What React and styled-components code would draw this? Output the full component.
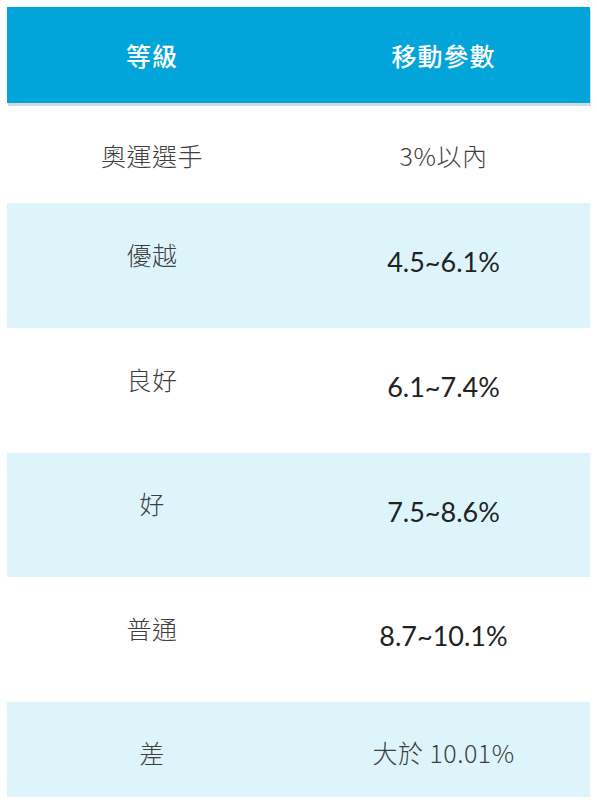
import React from 'react'
import styled, { createGlobalStyle } from 'styled-components'

const GlobalStyle = createGlobalStyle`
  html, body {
    margin: 0;
    padding: 0;
    background: #fff;
  }
  body {
    font-family: "Noto Sans CJK TC", "Noto Sans", sans-serif;
  }
`

const Page = styled.div`
  width: 597px;
  height: 804px;
  padding: 7px 0 0 7px;
  box-sizing: border-box;
`

const Table = styled.div`
  width: 583px;
  display: flex;
  flex-direction: column;
`

const Header = styled.div`
  display: grid;
  grid-template-columns: 290px 1fr;
  height: 96px;
  background: #02a5d9;
  box-shadow: 1px 3px 0 #d3dadd;
  margin-bottom: 3px;
`

const HeadCell = styled.div`
  display: flex;
  align-items: center;
  justify-content: center;
  color: #fff;
  font-size: 25px;
  font-weight: 500;
  letter-spacing: 1px;
`

const Row = styled.div`
  display: grid;
  grid-template-columns: 290px 1fr;
  height: ${p => p.$h}px;
  background: ${p => (p.$tint ? '#def4fb' : '#fff')};
`

const Cell = styled.div`
  display: flex;
  align-items: center;
  justify-content: center;
  padding-bottom: ${p => p.$lift || 0}px;
  padding-top: ${p => p.$drop || 0}px;
  font-size: 25px;
  font-weight: 300;
  letter-spacing: 0.5px;
  color: #3f3f3f;
`

const Num = styled.span`
  font-family: Lato, "Liberation Sans", sans-serif;
  font-size: 27px;
  font-weight: 400;
  letter-spacing: 0;
  color: #222;
`

const rows = [
  { grade: '奧運選手', value: '3%以內', h: 97 },
  { grade: '優越', value: '4.5~6.1%', num: true, h: 125, tint: true },
  { grade: '良好', value: '6.1~7.4%', num: true, h: 125 },
  { grade: '好', value: '7.5~8.6%', num: true, h: 124, tint: true },
  { grade: '普通', value: '8.7~10.1%', num: true, h: 125 },
  { grade: '差', value: '大於 10.01%', h: 95, tint: true, drop: 5 },
]

export default function App() {
  return (
    <Page>
      <GlobalStyle />
      <Table>
        <Header>
          <HeadCell>等級</HeadCell>
          <HeadCell>移動參數</HeadCell>
        </Header>
        {rows.map(r => (
          <Row key={r.grade} $h={r.h} $tint={r.tint}>
            <Cell $lift={r.num ? 24 : 0} $drop={r.drop}>{r.grade}</Cell>
            <Cell $lift={r.num ? 8 : 0} $drop={r.drop}>
              {r.num ? <Num>{r.value}</Num> : r.value}
            </Cell>
          </Row>
        ))}
      </Table>
    </Page>
  )
}
